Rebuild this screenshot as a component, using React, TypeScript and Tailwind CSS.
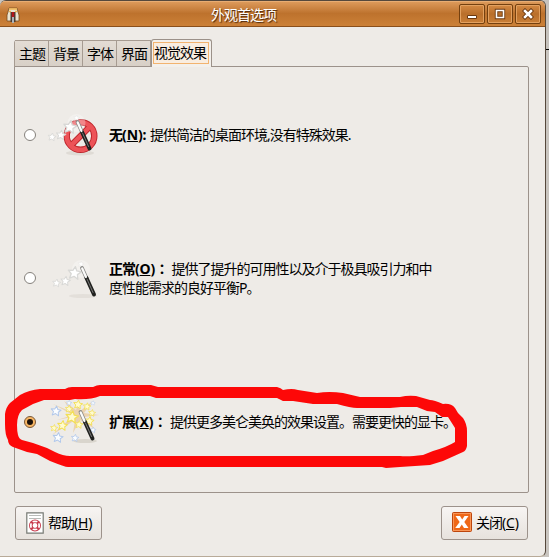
import React from "react";

const FONT = "font-['Noto_Sans','Noto_Sans_CJK_SC',sans-serif]";

const STAR = "M0-5L1.5-1.8L5-1.5L2.4.9L3.2 4.4L0 2.6L-3.2 4.4L-2.4.9L-5-1.5L-1.5-1.8Z";

function Star({ x, y, s = 1, fill = "#fff", stroke = "#d8d8d6", r = 8 }: { x: number; y: number; s?: number; fill?: string; stroke?: string; r?: number }) {
  return <path d={STAR} transform={`translate(${x} ${y}) rotate(${r}) scale(${s})`} fill={fill} stroke={stroke} strokeWidth="1" strokeLinejoin="round" />;
}

function Wand() {
  return (
    <g strokeLinecap="round">
      <path d="M32 13L36.5 23" stroke="#8b8b89" strokeWidth="3.8" />
      <path d="M36.5 23L44 39.5" stroke="#20211f" strokeWidth="4" />
      <path d="M32.2 13.5L36 22" stroke="#fbfbfa" strokeWidth="2.2" />
      <path d="M37 24L43 37.5" stroke="#777" strokeWidth="1" />
    </g>
  );
}

function PlainStars() {
  return (
    <g>
      <circle cx="31" cy="14" r="9" fill="#fff" opacity=".3" />
      <Star x={24.5} y={18} s={1.3} />
      <Star x={15.5} y={26} s={0.95} />
      <Star x={6.5} y={28} s={0.8} />
      <Star x={31} y={9} s={0.6} stroke="#e9e8e5" />
    </g>
  );
}

function NoneIcon() {
  return (
    <svg width="52" height="46" viewBox="0 0 52 46" className="block overflow-visible">
      <ellipse cx="30" cy="41" rx="14" ry="2.5" fill="#d5d1ca" opacity=".6" />
      <g fill="none">
        <circle cx="30.5" cy="24" r="13.8" stroke="#bd252b" strokeWidth="6.4" />
        <path d="M40.5 14L20.5 34" stroke="#bd252b" strokeWidth="6.2" />
        <circle cx="30.5" cy="24" r="13.8" stroke="#ed5358" strokeWidth="4.6" />
        <path d="M40.5 14L20.5 34" stroke="#ed5358" strokeWidth="4.4" />
      </g>
      <g transform="translate(-4.5 -3)">
        <PlainStars />
        <Wand />
      </g>
    </svg>
  );
}

function NormalIcon() {
  return (
    <svg width="52" height="46" viewBox="0 0 52 46" className="block">
      <ellipse cx="33" cy="41" rx="14" ry="2" fill="#dedad4" opacity=".7" />
      <PlainStars />
      <Wand />
    </svg>
  );
}

function ExtraIcon() {
  const y = { fill: "#fffbd0", stroke: "#f3df55" };
  const b = { fill: "#fbfdff", stroke: "#b1c8eb" };
  return (
    <svg width="52" height="46" viewBox="0 0 52 46" className="block">
      <path d="M23 16L3 5L22 13L14 2L26 11L29 1L30 12L43 2L34 14L49 16L34 18L45 30L30 21L23 34L25 21L2 36L22 18L7 21Z" fill="#eac491" opacity=".65" />
      <ellipse cx="35" cy="42" rx="12" ry="2" fill="#d9d5cd" />
      <Star x={6} y={12} s={1} {...b} />
      <Star x={19} y={4} s={0.55} {...b} />
      <Star x={43} y={4} s={0.45} {...b} />
      <Star x={8} y={38.5} s={1} {...b} />
      <Star x={25} y={39} s={0.75} {...b} />
      <Star x={43} y={31} s={0.6} {...b} />
      <Star x={28} y={5.5} s={0.9} {...y} />
      <Star x={37} y={7.5} s={0.75} {...y} />
      <Star x={42} y={14} s={0.7} {...y} />
      <Star x={39.5} y={22} s={0.9} {...y} />
      <Star x={29} y={25.5} s={0.8} {...y} />
      <Star x={19} y={10} s={0.75} {...y} />
      <Star x={22} y={18} s={1.25} {...y} />
      <Star x={12.5} y={26.5} s={1} {...y} />
      <Star x={4} y={29} s={0.7} {...y} />
      <g transform="translate(-1.5 0)"><Wand /></g>
    </svg>
  );
}

function Radio({ checked = false }: { checked?: boolean }) {
  return (
    <span className={`flex h-[12px] w-[12px] shrink-0 items-center justify-center rounded-full border ${checked ? "border-[#79583a] bg-[#f8b765]" : "border-[#85817c] bg-white"}`}>
      {checked && <span className="h-[6px] w-[6px] rounded-full bg-[#1b1008]" />}
    </span>
  );
}

function Option({ icon, checked, children, className }: { icon: React.ReactNode; checked?: boolean; children: React.ReactNode; className: string }) {
  return (
    <label className={`flex items-center pl-[9px] ${className}`}>
      <Radio checked={checked} />
      <span className="ml-[13px] w-[60px] shrink-0 pl-[1px]">{icon}</span>
      <span className="block pb-[1px] whitespace-nowrap">{children}</span>
    </label>
  );
}

function Key({ children }: { children: string }) {
  return <span className="tracking-[-0.2px]">(<u>{children}</u>)</span>;
}

function WideColon() {
  return <span lang="zh-TW" className="font-['Noto_Sans_CJK_TC',sans-serif] leading-none">：</span>;
}

function WindowButton({ children }: { children: React.ReactNode }) {
  return (
    <button className="flex h-[20px] w-[26px] items-center justify-center rounded-[2px] border border-[#74400f] bg-linear-to-b from-[#d58a43] via-[#b96f2b] to-[#ca7f37] shadow-[inset_0_0_0_1px_#e3a160]">
      <svg width="12" height="12" viewBox="0 0 12 12" className="block">{children}</svg>
    </button>
  );
}

function Tab({ children }: { children: React.ReactNode }) {
  return <div className="h-[26px] w-[34px] border-t border-r border-[#a69b91] bg-linear-to-b from-[#e3dcd4] to-[#d8d0c7] pt-[3px] pl-[4px]">{children}</div>;
}

export default function App() {
  return (
    <div className={`relative flex h-[557px] w-[549px] overflow-hidden bg-[#c9c5c0] text-[14px] leading-[19px] tracking-[-1px] text-black ${FONT}`}>
      <div className="flex h-full w-[546px] flex-col overflow-hidden rounded-t-[6px] rounded-br-[6px] border-t border-r border-b border-[#55483c] border-b-[#b8aa98] bg-[#eeebe7]">
        <header className="flex h-[26px] shrink-0 items-center border-b border-[#8a4f1b] bg-linear-to-b from-[#df9d5d] via-[#bd722d] to-[#cc8138] pr-[4px] pl-[6px] shadow-[inset_0_1px_0_#e8ad73]">
          <svg width="14" height="17" viewBox="0 0 14 17" className="mt-[3px] block">
            <path d="M3 1H11L12 5L13 8V14H1V8L2 5Z" fill="#e9e3d0" stroke="#7a4c20" strokeWidth=".8" />
            <path d="M3 2H11M3 4.5H5M9 4.5H11" stroke="#f3b64e" strokeWidth="1.6" />
            <path d="M4.5 5H9.5V15H4.5Z" fill="#4b3a30" />
            <path d="M7 5V10" stroke="#b1161b" strokeWidth="2.4" />
            <path d="M7 10V16" stroke="#a9b2b7" strokeWidth="2" />
          </svg>
          <h1 className="flex-1 pt-[1px] pr-[72px] pl-[191px] whitespace-nowrap text-white [text-shadow:1px_1px_1px_#4a260b]">外观首选项</h1>
          <div className="flex gap-[2px]">
            <WindowButton><path d="M1.5 7.5H10.5V10.5H1.5Z" fill="#fff" stroke="#6c3910" /></WindowButton>
            <WindowButton><path d="M2.5 2.5H9.5V9.5H2.5Z" fill="none" stroke="#6c3910" strokeWidth="3.4" /><path d="M2.5 2.5H9.5V9.5H2.5Z" fill="none" stroke="#fff" strokeWidth="1.6" /></WindowButton>
            <WindowButton><path d="M3 3L9 9M9 3L3 9" stroke="#6c3910" strokeWidth="4.4" strokeLinecap="square" /><path d="M3 3L9 9M9 3L3 9" stroke="#fff" strokeWidth="2.5" strokeLinecap="square" /></WindowButton>
          </div>
        </header>

        <nav className="z-10 mt-[12px] ml-[14px] flex h-[28px] shrink-0 items-end">
          <div className="flex h-[27px] rounded-tl-[3px] border-l border-[#a69b91]">
            <Tab>主题</Tab><Tab>背景</Tab><Tab>字体</Tab><Tab>界面</Tab>
          </div>
          <div className="h-[28px] w-[61px] rounded-t-[3px] border border-b-0 border-[#9b9189] bg-[#f3f0ec] p-[2px] pl-[1px]">
            <div className="h-[22px] border border-[#f2b36f] bg-[#f9ede0] leading-[20px]">视觉效果</div>
          </div>
        </nav>
        <main className="-mt-[1px] ml-[14px] flex h-[427px] w-[515px] shrink-0 flex-col rounded-b-[2px] rounded-tr-[2px] border border-[#9c928b]">
          <Option className="mt-[45px] h-[46px]" icon={<NoneIcon />}><b>无<span className="tracking-[-0.1px]">(<u>N</u>):</span></b><span className="tracking-normal"> </span>提供简洁的桌面环境,没有特殊效果.</Option>
          <Option className="mt-[97px] h-[46px]" icon={<NormalIcon />}><b>正常<Key>O</Key><WideColon /></b><span className="tracking-normal"> </span>提供了提升的可用性以及介于极具吸引力和中<br />度性能需求的良好平衡P。</Option>
          <Option checked className="mt-[98px] h-[46px]" icon={<ExtraIcon />}><b>扩展<Key>X</Key><WideColon /></b><span className="tracking-normal"> </span>提供更多美仑美奂的效果设置。需要更快的显卡。</Option>
        </main>
        <footer className="mt-[13px] flex justify-between pr-[17px] pl-[15px]">
          <button className="flex h-[34px] w-[87px] items-center rounded-[3px] border border-[#9c928b] bg-linear-to-b from-[#f7f5f3] to-[#e7e2dd] pl-[10px]">
            <svg width="18" height="22" viewBox="0 0 18 22" className="mr-[4px] block">
              <path d="M.8.8H17.2V21.2H.8Z" fill="#fff" stroke="#777a74" strokeWidth="1.2" />
              <path d="M3 3.5H15M3 6.5H15" stroke="#b9bbb8" />
              <circle cx="9" cy="13.5" r="4.2" fill="none" stroke="#c83b4d" strokeWidth="3.6" />
              <circle cx="9" cy="13.5" r="4.2" fill="none" stroke="#fff" strokeWidth="1.8" />
              <path d="M5 9.5L7 11.5M13 9.5L11 11.5M5 17.5L7 15.5M13 17.5L11 15.5" stroke="#c83b4d" strokeWidth="2" />
            </svg>
            <span className="pb-[1px]">帮助<Key>H</Key></span>
          </button>
          <button className="flex h-[34px] w-[87px] items-center rounded-[3px] border border-[#9c928b] bg-linear-to-b from-[#f7f5f3] to-[#e7e2dd] pl-[10px]">
            <svg width="20" height="20" viewBox="0 0 20 20" className="mr-[4px] mb-[2px] block">
              <rect x=".5" y=".5" width="19" height="19" rx="1" fill="#ef6818" stroke="#bd460d" />
              <rect x="1.5" y="1.5" width="17" height="17" fill="none" stroke="#f99657" />
              <path d="M3.5 4H8L10.2 7.5L12.5 4H16.5L12.3 10L16.5 16H12L9.8 12.5L7.5 16H3.2L7.7 10Z" fill="#fff" />
            </svg>
            <span className="pb-[1px]">关闭<Key>C</Key></span>
          </button>
        </footer>
      </div>
      <div className="h-[50px] w-[3px] border-b border-black bg-[#c6c2bd]" />
      <svg className="pointer-events-none absolute inset-0 z-20" width="549" height="557" viewBox="0 0 549 557">
        <path fill="#fd0808" fillRule="evenodd" d="M5 424V414Q6 407 10 403L20 395Q29 390 40 389H65Q68 387 72 387H93Q97 385 100 385H151L158 387H277Q281 388 283 390Q292 388 298 390L317 393Q329 391 343 393L360 397H400Q408 395 416 396L430 400Q434 400 443 404Q451 403 455 408L458 413L463 418Q467 424 467 431V446Q466 451 463 452L443 461L430 465L400 467L386 468L382 467H68Q65 467 50 461L37 454L27 452L13 447Q8 445 8 440Q5 435 5 424ZM17 425Q17 431 18 435Q19 439 22 440L33 443L47 448L55 452Q63 456 70 456H400Q408 457 423 455L433 451Q447 447 455 442V428L448 417H442L435 412L427 411L417 407H401L390 408H357Q351 408 337 404H313L293 401H283L277 398H156L150 396H100Q90 400 75 399L70 400H44L33 404L22 410Q17 415 17 425Z" />
      </svg>
    </div>
  );
}
